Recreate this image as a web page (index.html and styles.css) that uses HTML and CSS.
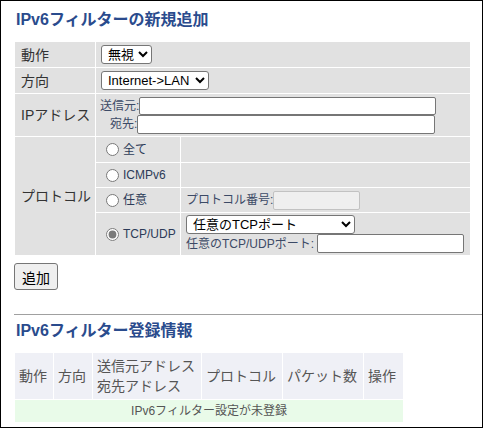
FILE: index.html
```html
<!DOCTYPE html>
<html lang="ja">
<head>
<meta charset="utf-8">
<title>IPv6フィルター</title>
<link rel="stylesheet" href="styles.css">
</head>
<body>
<div class="page">
  <h2 class="ttl">IPv6フィルターの新規追加</h2>
  <table class="form">
    <colgroup><col class="c1"><col class="c2"><col class="c3"></colgroup>
    <tr>
      <th class="h25">動作</th>
      <td colspan="2" class="val"><select class="sel sel-act"><option>無視</option></select></td>
    </tr>
    <tr>
      <th class="h25">方向</th>
      <td colspan="2" class="val"><select class="sel sel-dir"><option>Internet-&gt;LAN</option></select></td>
    </tr>
    <tr>
      <th class="h42">IPアドレス</th>
      <td colspan="2" class="val addr-cell">
        <div class="addr"><span class="small">送信元:</span><input type="text" class="txt ip"></div>
        <div class="addr addr2"><span class="small">宛先:</span><input type="text" class="txt ip"></div>
      </td>
    </tr>
    <tr>
      <th rowspan="4">プロトコル</th>
      <td class="rad h25"><label class="rl"><input type="radio" name="p">全て</label></td>
      <td></td>
    </tr>
    <tr>
      <td class="rad h24"><label class="rl"><input type="radio" name="p">ICMPv6</label></td>
      <td></td>
    </tr>
    <tr>
      <td class="rad h24"><label class="rl"><input type="radio" name="p">任意</label></td>
      <td class="val"><div class="line"><span class="small lbl-num">プロトコル番号:</span><input type="text" class="txt num" disabled></div></td>
    </tr>
    <tr>
      <td class="rad h42"><label class="rl"><input type="radio" name="p" class="chk" checked>TCP/UDP</label></td>
      <td class="val">
        <div class="line"><select class="sel sel-port"><option>任意のTCPポート</option></select></div>
        <div class="line"><span class="small lbl-port">任意のTCP/UDPポート:</span><input type="text" class="txt port"></div>
      </td>
    </tr>
  </table>
  <div class="actions"><button class="btn" type="button">追加</button></div>
  <hr class="sep">
  <h2 class="ttl ttl2">IPv6フィルター登録情報</h2>
  <table class="list">
    <colgroup><col class="l1"><col class="l2"><col class="l3"><col class="l4"><col class="l5"><col class="l6"></colgroup>
    <tr class="head">
      <th>動作</th>
      <th>方向</th>
      <th>送信元アドレス<br>宛先アドレス</th>
      <th>プロトコル</th>
      <th>パケット数</th>
      <th>操作</th>
    </tr>
    <tr class="empty">
      <td colspan="6">IPv6フィルター設定が未登録</td>
    </tr>
  </table>
</div>
</body>
</html>
```

FILE: styles.css
```css
* { box-sizing: border-box; }
html, body { margin: 0; padding: 0; background: #fff; }
body {
  font-family: "Liberation Sans", "Noto Sans CJK JP", sans-serif;
  color: #333;
}
.page {
  width: 483px;
  height: 428px;
  border: 1px solid #000;
  padding-left: 13px;
  overflow: hidden;
}
.ttl {
  margin: 9px 0 0 2px;
  font-size: 16px;
  line-height: 20px;
  font-weight: bold;
  color: #2a4b8d;
}
.form {
  margin-top: 11px;
  border-collapse: separate;
  border-spacing: 1px;
  table-layout: fixed;
  width: 457px;
}
.form .c1 { width: 80px; }
.form .c2 { width: 84px; }
.form th, .form td {
  background: #e1e1e1;
  padding: 0;
  vertical-align: middle;
}
.form th {
  text-align: left;
  font-weight: normal;
  font-size: 14px;
  line-height: 18px;
  color: #333;
  padding-left: 6px;
}
.h25 { height: 25px; }
.h24 { height: 24px; }
.h42 { height: 42px; }
.val { padding-left: 5px !important; }
.sel {
  height: 19px;
  font-family: "Liberation Sans", "Noto Sans CJK JP", sans-serif;
  font-size: 13px;
  color: #000;
  background: #fff;
  border: 1px solid #767676;
  border-radius: 3px;
  margin: 0;
  padding: 0 0 0 2px;
  display: block;
}
.sel-act { width: 51px; }
.sel-dir { width: 108px; }
.sel-port { width: 169px; }
.small {
  font-size: 12px;
  line-height: 18px;
  color: #3c4a66;
  white-space: nowrap;
}
.addr-cell { padding-left: 4px !important; }
.addr { display: flex; align-items: center; height: 18px; }
.addr2 { padding-left: 10px; height: 19px; }
.txt {
  margin: 0;
  height: 18px;
  border: 1px solid #767676;
  border-radius: 2px;
  background: #fff;
  padding: 0 2px;
  font-size: 12px;
}
.ip { width: 297px; }
.addr2 .ip { width: 298px; height: 19px; }
.line { display: flex; align-items: center; height: 19px; }
.lbl-num { display: inline-block; width: 87px; }
.num {
  width: 87px;
  height: 19px;
  background: #efefef;
  border-color: #c2c2c2;
}
.lbl-port { display: inline-block; width: 131px; }
.port { width: 147px; height: 19px; }
.rad { padding-left: 10px !important; }
.rl {
  display: flex;
  align-items: center;
  font-size: 12px;
  line-height: 16px;
  color: #2c3b58;
}
.rl input {
  margin: 0 4px 0 0;
  width: 13px;
  height: 13px;
}
.rl .chk { accent-color: #7a7a7a; }
.actions { margin-top: 7px; display: flex; }
.btn {
  height: 27px;
  padding: 0 7px;
  font-family: "Liberation Sans", "Noto Sans CJK JP", sans-serif;
  font-size: 14px;
  color: #000;
  background: #efefef;
  border: 1px solid #767676;
  border-radius: 3px;
}
.sep {
  margin: 24px 0 0 0;
  height: 0;
  border: 0;
  border-top: 1px solid #a0a0a0;
}
.ttl2 { margin-top: 6px; }
.list {
  margin-top: 11px;
  border-collapse: separate;
  border-spacing: 1px;
  table-layout: fixed;
  width: 390px;
}
.list .l1 { width: 38px; }
.list .l2 { width: 38px; }
.list .l3 { width: 108px; }
.list .l4 { width: 80px; }
.list .l5 { width: 80px; }
.list .l6 { width: 39px; }
.list th {
  background: #eff0f6;
  color: #555;
  font-weight: normal;
  font-size: 14px;
  line-height: 20px;
  height: 46px;
  padding: 0 4px;
  text-align: left;
  white-space: nowrap;
  vertical-align: middle;
}
.list .empty td {
  background: #e9fbe9;
  color: #555;
  font-size: 12px;
  line-height: 18px;
  height: 22px;
  text-align: center;
  padding: 0;
}
```
